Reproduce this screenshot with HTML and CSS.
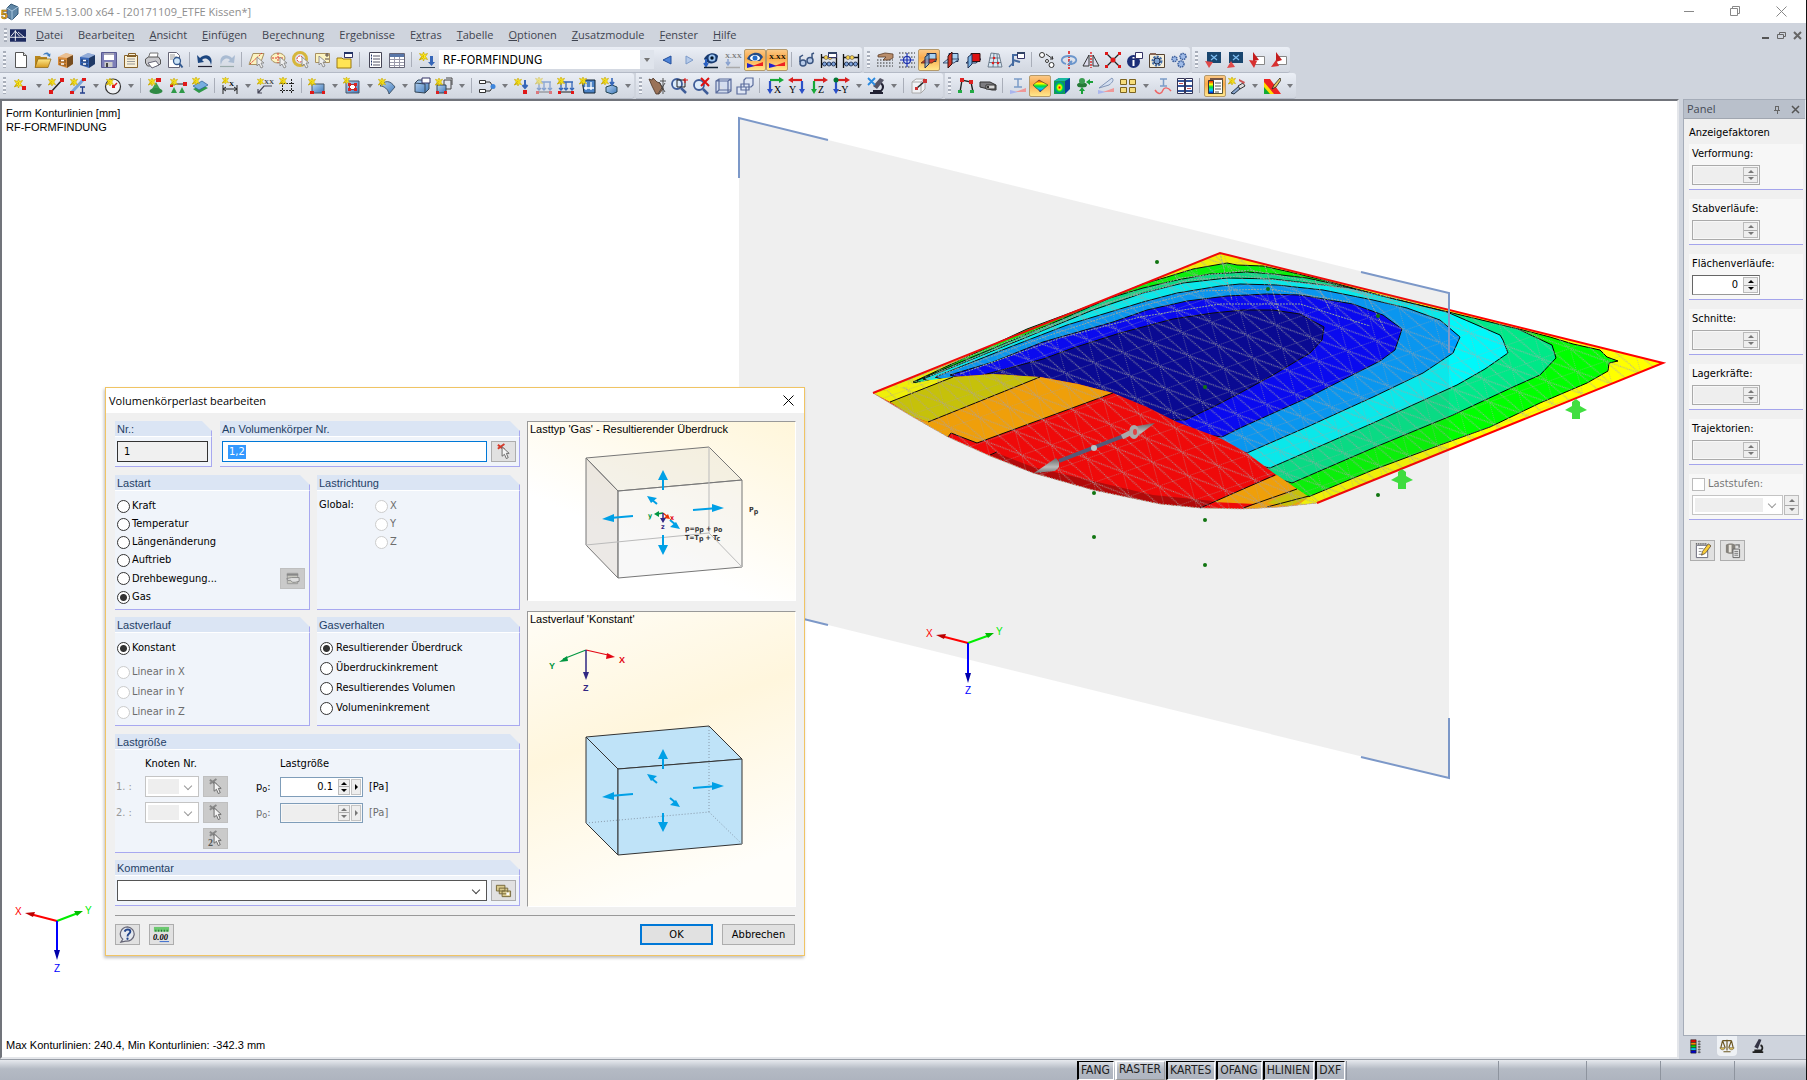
FILE: index.html
```html
<!DOCTYPE html>
<html lang="de">
<head>
<meta charset="utf-8">
<title>RFEM 5.13.00 x64 - [20171109_ETFE Kissen*]</title>
<link rel="stylesheet" href="styles.css">
</head>
<body>
<svg class="defs" aria-hidden="true">
<defs>
<linearGradient id="gb" x1="0" y1="0" x2="1" y2="1"><stop offset="0" stop-color="#b9d6f4"/><stop offset="1" stop-color="#3f78b8"/></linearGradient>
<linearGradient id="gf" x1="0" y1="0" x2="0" y2="1"><stop offset="0" stop-color="#ffe98a"/><stop offset="1" stop-color="#d69a20"/></linearGradient>
<linearGradient id="rb" x1="0" y1="0" x2="0" y2="1"><stop offset="0" stop-color="#e00"/><stop offset=".3" stop-color="#ff0"/><stop offset=".5" stop-color="#0d3"/><stop offset=".75" stop-color="#0cf"/><stop offset="1" stop-color="#00c"/></linearGradient>
<radialGradient id="rr"><stop offset="0" stop-color="#e00"/><stop offset=".35" stop-color="#ff0"/><stop offset=".65" stop-color="#0d3"/><stop offset="1" stop-color="#06c"/></radialGradient>
<linearGradient id="cone" x1="0" y1="0" x2="0" y2="1"><stop offset="0" stop-color="#666"/><stop offset=".6" stop-color="#bbb"/><stop offset="1" stop-color="#777"/></linearGradient>
<pattern id="mesh" width="30" height="24" patternUnits="userSpaceOnUse" patternTransform="matrix(.97 -.34 .27 .96 1217 345)"><path d="M0 0H30M0 0V24M0 0L30 24M0 0L15 24M15 0L30 24" fill="none" stroke="#aaa" stroke-width="1" stroke-dasharray="1 1"/></pattern>
<pattern id="meshfront" width="31" height="24" patternUnits="userSpaceOnUse" patternTransform="matrix(.95 -.33 .27 1 1103 400)"><path d="M0 0H31M0 0V24M0 0L31 24M0 0L15 24M15 0L31 24" fill="none" stroke="#b4a8a8" stroke-width="1" stroke-dasharray="1 1"/></pattern>

<symbol id="star" viewBox="0 0 9 9"><path d="M4.500 3.200 4.500 5.800 .5 8 2.500 4.500 .5 1.500 3.500 2.500 4.500 0 5.500 2.500 8.500 1.500 6.500 4.500 8.500 7.500 5.500 6.500 4.500 9 3.500 6.500 .5 7.500Z" fill="#ffee20" stroke="#c8a800" stroke-width=".7"/></symbol>
<symbol id="new" viewBox="0 0 18 18"><path d="M3.500 1.500h8l3 3v12h-11z" fill="#fff" stroke="#555"/><path d="M11.500 1.500v3h3" fill="#ddd" stroke="#555"/></symbol>
<symbol id="open" viewBox="0 0 18 18"><path d="M1 5h5l1 1h6v10H1z" fill="#b8861c"/><path d="M4 8h13l-3 8.500H1z" fill="url(#gf)" stroke="#8a6210" stroke-width=".7"/><path d="M9 4c2-3 5-3 6-1l1.500-.5L16 6l-3-1.500 1-.5c-1-1-3-1-5 0z" fill="#3d7dc0"/></symbol>
<symbol id="cab" viewBox="0 0 18 18"><path d="M2 6l8-4 7 2v9l-6 4-9-3z" fill="currentColor"/><path d="M11 7l6-3v9l-6 4z" fill="#000" opacity=".45"/><path d="M2 6l8-4 7 2-6 3z" fill="#fff" opacity=".45"/><path d="M3 8l7 1v3l-7-1zM3 12l7 1v2.500l-7-1.500z" fill="#000" opacity=".25"/><path d="M5 9.500h3M5 13h3" stroke="#fff" stroke-width="1.300"/></symbol>
<symbol id="save" viewBox="0 0 18 18"><path d="M1.500 1.500h15v15h-15z" fill="#7d7fb8" stroke="#585a90"/><path d="M4 2h10v7H4z" fill="#fff"/><path d="M4 2h10v2H4z" fill="#aab"/><path d="M4.500 11h8v5h-8z" fill="#ccc"/><path d="M6 12h2v4H6z" fill="#444"/></symbol>
<symbol id="clip" viewBox="0 0 18 18"><path d="M2.500 4.500h4v-2h7v2h2v12h-13z" fill="#f8f0d8" stroke="#85612a"/><path d="M5 8h8M5 10.500h8M5 13h8" stroke="#999"/><path d="M5 5h9" stroke="#85612a" stroke-width="2"/></symbol>
<symbol id="print" viewBox="0 0 18 18"><path d="M4 8l2-6h8l-1 6z" fill="#fff" stroke="#777"/><path d="M1.500 8l3-2h10l2 3v4l-4 2h-9l-2-3z" fill="#c8c8cc" stroke="#555"/><path d="M4 12l8-2 3 4-7 3z" fill="#fff" stroke="#667"/></symbol>
<symbol id="preview" viewBox="0 0 18 18"><path d="M2.500 1.500h8l3 3v12h-11z" fill="#fff" stroke="#667"/><path d="M4 4h5M4 6h7M4 8h3" stroke="#999"/><circle cx="11" cy="10" r="3.500" fill="#cfe6f8" stroke="#345a90" stroke-width="1.300"/><path d="M13.500 12.500l3 4" stroke="#345a90" stroke-width="2"/></symbol>
<symbol id="undo" viewBox="0 0 18 18"><path d="M1 4l1 8 6-1-2-2c3-3 8-1 9 5 3-9-5-13-11-7z" fill="currentColor"/><path d="M2 15.500h14" stroke="#223" stroke-width="1.200"/></symbol>
<symbol id="redo" viewBox="0 0 18 18"><path d="M17 4l-1 8-6-1 2-2c-3-3-8-1-9 5-3-9 5-13 11-7z" fill="#a9bbd2"/><path d="M2 15.500h14" stroke="#9aa" stroke-width="1.200"/></symbol>
<symbol id="cur" viewBox="0 0 9 12"><path d="M1 0v9l2-2 2 4 2-1-2-4h3z" fill="#eee" stroke="#888" stroke-width=".9"/></symbol>
<symbol id="selp" viewBox="0 0 18 18"><path d="M5 2.500h11l-4 11H1z" fill="#fbf3c0" stroke="#a89060"/><path d="M2 13L14 2" stroke="#d33" stroke-dasharray="2 1"/><use href="#cur" x="8" y="6" width="9" height="12"/></symbol>
<symbol id="sele" viewBox="0 0 18 18"><ellipse cx="8" cy="7" rx="7" ry="5" fill="#fbf3c0" stroke="#a89060"/><path d="M8 2v10M2 7h12" stroke="#d33" stroke-dasharray="2 1"/><use href="#cur" x="9" y="6" width="9" height="12"/></symbol>
<symbol id="selr" viewBox="0 0 18 18"><circle cx="8" cy="8" r="6.500" fill="none" stroke="#d6b63c" stroke-width="3"/><circle cx="8" cy="8" r="3" fill="#fff" stroke="#d33" stroke-dasharray="2 1"/><use href="#cur" x="9" y="6" width="9" height="12"/></symbol>
<symbol id="selx" viewBox="0 0 18 18"><path d="M1.500 2.500h14v9h-14z" fill="#fbf3c0" stroke="#a89060"/><path d="M11 4h4M13 2v4M11 8h4" stroke="#544"/><use href="#cur" x="4" y="5" width="9" height="12"/></symbol>
<symbol id="seld" viewBox="0 0 18 18"><path d="M1 7h5l1 1h8v9H1z" fill="#ffe454" stroke="#9c7a10"/><path d="M8.500 1.500h8v5h-8z" fill="#fff" stroke="#336"/><path d="M8 2h9" stroke="#236" stroke-width="2"/></symbol>
<symbol id="nav" viewBox="0 0 18 18"><path d="M3.500 1.500h12v15h-12z" fill="#fff" stroke="#445"/><path d="M7 5h7M7 8h7M7 11h7M7 14h7" stroke="#556"/><path d="M5 4.500h1M5 7.500h1M5 10.500h1M5 13.500h1" stroke="#236" stroke-width="2"/></symbol>
<symbol id="table" viewBox="0 0 18 18"><path d="M1.500 2.500h15v14h-15z" fill="#fff" stroke="#667"/><path d="M2 3h14v3H2z" fill="#5876a8"/><path d="M2 8.500h14M2 11.500h14M2 14.500h14M6.500 6v10M11.500 6v10" stroke="#99a"/></symbol>
<symbol id="lc" viewBox="0 0 18 18"><use href="#star" x="1" y="1" width="9" height="9"/><path d="M12 5h3v6h2l-3.500 4L10 11h2z" fill="#3566b8"/><path d="M2 16.500h15" stroke="#345"/></symbol>
<symbol id="prev" viewBox="0 0 18 18"><path d="M13 5v8L5 9z" fill="#4d83d8" stroke="#234f9c"/></symbol>
<symbol id="next" viewBox="0 0 18 18"><path d="M6 5v8l7-4z" fill="#b6cbea" stroke="#7d9bc9"/></symbol>
<symbol id="eyel" viewBox="0 0 18 18"><path d="M2 8c2-6 11-8 14-3l-1 5c-3 3-8 3-10 1z" fill="#173a70"/><circle cx="10" cy="7" r="3.500" fill="#9cc4f0"/><circle cx="10" cy="7" r="1.700" fill="#012"/><path d="M4 8v6M2 12l2 3 2-3" stroke="#2b60c0" stroke-width="2" fill="none"/><path d="M2 16.500h14" stroke="#123" stroke-width="1.500"/></symbol>
<symbol id="xl" viewBox="0 0 18 18"><path d="M4 8v6M2 11l2 3 2-3" stroke="#8ba3cf" stroke-width="1.500" fill="none"/><path d="M2 16.500h14" stroke="#aaa" stroke-width="1.500"/><text x="1" y="7" class="ico" fill="#777">X.XX</text></symbol>
<symbol id="eyer" viewBox="0 0 18 18"><path d="M1 8c2-7 13-9 16-2l-3 4H5z" fill="#244b86"/><ellipse cx="9" cy="7" rx="5" ry="3" fill="#fff"/><circle cx="9" cy="7" r="2.500" fill="#256cc8"/><path d="M1 17v-5l8 3z" fill="#22c"/><path d="M17 11v4H6z" fill="#e22"/></symbol>
<symbol id="xr" viewBox="0 0 18 18"><path d="M1 17v-5l8 3z" fill="#22c"/><path d="M17 11v4H6z" fill="#e22"/><text x="1" y="8" class="ico" fill="#000">X.XX</text></symbol>
<symbol id="glasses" viewBox="0 0 18 18"><circle cx="5" cy="12" r="3" fill="#b8cbe8" stroke="#3b5580" stroke-width="1.500"/><circle cx="12" cy="9.500" r="3" fill="#b8cbe8" stroke="#3b5580" stroke-width="1.500"/><path d="M2 11V6l3-2M14 7V3l2-1" stroke="#3b5580" stroke-width="1.500" fill="none"/></symbol>
<symbol id="abac" viewBox="0 0 18 18"><path d="M1.500 3v14M16.500 3v14M1 6.500h16M1 13h16" stroke="#111" stroke-width="1.300"/><g fill="#f4d24c" stroke="#654" stroke-width=".6"><circle cx="6" cy="6.500" r="2"/><circle cx="10" cy="6.500" r="2"/></g><g fill="#7fa4dc" stroke="#124" stroke-width=".8"><circle cx="4.500" cy="13" r="2"/><circle cx="9" cy="13" r="2"/><circle cx="13.500" cy="13" r="2"/></g></symbol>
<symbol id="abacw" viewBox="0 0 18 18"><use href="#abac" width="18" height="18"/><path d="M8.500 1.500h8v5h-8z" fill="#fff" stroke="#336"/><path d="M8 2h9" stroke="#346" stroke-width="2"/></symbol>
<symbol id="handg" viewBox="0 0 18 18"><path d="M1 9h16M1 12h16M1 15h16" stroke="#333" stroke-dasharray="1.500 1.500"/><path d="M2 4l7-2 8 1v4l-4 2H7l3-3-8 0z" fill="#b98d6a" stroke="#5c3d28" stroke-width=".8"/></symbol>
<symbol id="snap" viewBox="0 0 18 18"><path d="M1 2h16M1 6h16M1 12h16M1 16h16" stroke="#333" stroke-dasharray="1.500 1.500"/><circle cx="9" cy="9" r="3.500" fill="#d5e0f5" stroke="#1a2fb0" stroke-width="1.200"/><path d="M9 2v14M2 9h14" stroke="#1a2fb0" stroke-width="1.200"/></symbol>
<symbol id="wp" viewBox="0 0 18 18"><path d="M7 2.500h9v8H7z" fill="#a8d0f0" stroke="#235"/><path d="M1 12l5-4h11l-5 4z" fill="currentColor" stroke="#531" stroke-width=".8"/><path d="M5 6l4-3v10l-4 4z" fill="#79b2e4" stroke="#235" fill-opacity=".7"/></symbol>
<symbol id="wpr" viewBox="0 0 18 18"><path d="M7 2.500h9v8H7z" fill="#a8d0f0" stroke="#235"/><path d="M1 12l5-4h11l-5 4z" fill="#a8d0f0" stroke="#235" stroke-width=".8"/><path d="M6 5l4-4v12l-4 4z" fill="currentColor" stroke="#311"/></symbol>
<symbol id="wpx" viewBox="0 0 18 18"><path d="M2 12l5-4h10l-5 4z" fill="#a8d0f0" stroke="#235"/><path d="M7 2.500h9v8H7z" fill="#d11" stroke="#311"/><path d="M4 6l4-3v10l-4 4z" fill="#79b2e4" stroke="#235"/></symbol>
<symbol id="grid3" viewBox="0 0 18 18"><path d="M5 2l8 1 3 13H2zM3.500 7h10.500M3 11.500h12M8 2L7 16M11 3l1 13" fill="#d8e8f4" stroke="#567" stroke-width=".8"/><g fill="#d22"><circle cx="8" cy="7" r="1.300"/><circle cx="7" cy="12" r="1.300"/><circle cx="12" cy="12" r="1.300"/></g></symbol>
<symbol id="ucs" viewBox="0 0 18 18"><path d="M5 15V4h8M5 9l7 2" stroke="#456aa0" stroke-width="2" fill="none"/><path d="M9.500 1.500h7v6h-7z" fill="#fff" stroke="#336"/><path d="M9 2h8" stroke="#346" stroke-width="2"/><path d="M1 16l5-5" stroke="#456aa0" stroke-width="1.500"/></symbol>
<symbol id="move" viewBox="0 0 18 18"><circle cx="4" cy="4" r="2.500" fill="#fff" stroke="#333"/><circle cx="13.500" cy="14" r="2.500" fill="#fff" stroke="#333"/><circle cx="9" cy="10" r="1.500" fill="#fff" stroke="#333"/><path d="M8 3l7 5M15 8l-3 0M15 8l-1-3" stroke="#333" fill="none"/></symbol>
<symbol id="rot" viewBox="0 0 18 18"><path d="M9 0v18" stroke="#d11" stroke-width="1.500" stroke-dasharray="3 1"/><path d="M6 13C-1 11 1 5 9 5s10 6 3 8l-3 0 3-3M12 13l-3-3" stroke="#6b96cc" stroke-width="1.800" fill="none"/></symbol>
<symbol id="mir" viewBox="0 0 18 18"><path d="M9 1v16" stroke="#d11" stroke-width="1.300" stroke-dasharray="2 1"/><path d="M7 4v11H1zM11 4v11h6z" fill="#dde" stroke="#333"/></symbol>
<symbol id="cross" viewBox="0 0 18 18"><path d="M2 2l14 14M16 2L2 16" stroke="#222" stroke-width="1.300"/><g fill="#e01818"><path d="M1 1h3v3H1zM14 1h3v3h-3zM1 14h3v3H1zM14 14h3v3h-3z"/><circle cx="9" cy="9" r="2.500"/></g></symbol>
<symbol id="info" viewBox="0 0 18 18"><circle cx="7.500" cy="10.500" r="6.500" fill="#1c2f78"/><path d="M7.500 6v1.500M7.500 9v6" stroke="#fff" stroke-width="2"/><path d="M9.500 1.500h7v6h-7z" fill="#fff" stroke="#336"/></symbol>
<symbol id="gearw" viewBox="0 0 18 18"><path d="M1.500 3.500h15v13h-15z" fill="#f6efda" stroke="#543"/><path d="M2 2h6v2H2z" fill="#865"/><circle cx="9" cy="10" r="4" fill="none" stroke="#446ea8" stroke-width="3" stroke-dasharray="2 1"/><circle cx="9" cy="10" r="3" fill="#7fa4d4" stroke="#235"/></symbol>
<symbol id="gears" viewBox="0 0 18 18"><g fill="#9fbbe8" stroke="#3c5f9c" stroke-width="1.500" stroke-dasharray="1.500 .7"><circle cx="4.500" cy="8" r="2.500"/><circle cx="13" cy="5.500" r="3"/><circle cx="11" cy="13" r="3"/></g></symbol>
<symbol id="dxf" viewBox="0 0 18 18"><path d="M3 1h14v11H3z" fill="#19466f"/><path d="M7 4l6 5M13 4L7 9" stroke="#7fbdf0" stroke-width="1.200"/><path d="M1 10l8 1-4 6z" fill="#e04a4a"/></symbol>
<symbol id="dxfu" viewBox="0 0 18 18"><path d="M3 1h14v11H3z" fill="#19466f"/><path d="M7 4l6 5M13 4L7 9" stroke="#7fbdf0" stroke-width="1.200"/><path d="M1 17l8-1-4-6z" fill="#e04a4a"/></symbol>
<symbol id="pdf" viewBox="0 0 18 18"><path d="M6.500 5.500h10v8h-10z" fill="#fff" stroke="#888"/><path d="M5 1l6 8-6 1z" fill="#c41c1c"/><path d="M1 9l8 1-3 7z" fill="#d83030"/></symbol>
<symbol id="pdfu" viewBox="0 0 18 18"><path d="M6.500 5.500h10v8h-10z" fill="#fff" stroke="#888"/><path d="M6 1l6 8-6 2z" fill="#c41c1c"/><path d="M1 16l8-1-3-6z" fill="#d83030"/></symbol>
<symbol id="node" viewBox="0 0 18 18"><use href="#star" x="2" y="2" width="9" height="9"/><path d="M10 9h4v4h-4z" fill="#e01818"/></symbol>
<symbol id="line" viewBox="0 0 18 18"><path d="M4 15L15 3" stroke="#222" stroke-width="1.400"/><path d="M2 13h4v4H2zM13 1h4v4h-4z" fill="#e01818"/><use href="#star" x="1" y="1" width="8" height="8"/></symbol>
<symbol id="member" viewBox="0 0 18 18"><path d="M3 15L14 3" stroke="#7ba4d8" stroke-width="3"/><path d="M1 14h4v3H1zM13 1h4v3h-4z" fill="#e01818"/><path d="M11 10h5M11 16h5M13.500 10v6" stroke="#25408c" stroke-width="1.300"/><use href="#star" x="1" y="1" width="8" height="8"/></symbol>
<symbol id="arc" viewBox="0 0 18 18"><circle cx="9" cy="9.500" r="7.500" fill="#fff" fill-opacity=".6" stroke="#333" stroke-width="1.200"/><path d="M9 10l4-4" stroke="#e01818" stroke-width="1.500"/><path d="M8 8h3v3H8z" fill="#e01818"/><use href="#star" x="2" y="1" width="8" height="8"/></symbol>
<symbol id="supp" viewBox="0 0 18 18"><path d="M9 5l4 7H5z" fill="#3fa050"/><ellipse cx="9" cy="14" rx="6.500" ry="3" fill="#2f8a44"/><path d="M9 1h5v4H9z" fill="#e01818"/><use href="#star" x="1" y="1" width="8" height="8"/></symbol>
<symbol id="lsupp" viewBox="0 0 18 18"><path d="M3 7h13" stroke="#222"/><path d="M14 5h4v4h-4zM1 7h3v3H1z" fill="#e01818"/><path d="M5 10l3 6H2zM13 10l3 6h-6z" fill="#2f9a48"/><use href="#star" x="1" y="1" width="8" height="8"/></symbol>
<symbol id="ssupp" viewBox="0 0 18 18"><path d="M2 12l6 4 9-5-6-3z" fill="#2f9a48"/><path d="M2 9l6 4 9-5-6-4z" fill="#77aee0" stroke="#2a5c94" stroke-width=".7"/><use href="#star" x="1" y="0" width="8" height="8"/></symbol>
<symbol id="dim" viewBox="0 0 18 18"><path d="M2 8v9M16 8v9M2 12h14M5 10l-3 2 3 2M13 10l3 2-3 2" stroke="#222" fill="none"/><text x="8" y="9" class="ico" fill="#000">X</text><use href="#star" x="1" y="0" width="7" height="7"/></symbol>
<symbol id="note" viewBox="0 0 18 18"><path d="M16 9H8l-6 7M2 12v4h4" stroke="#445" fill="none" stroke-width="1.200"/><text x="8" y="7" class="ico" fill="#444">XX</text><use href="#star" x="1" y="1" width="7" height="7"/></symbol>
<symbol id="guide" viewBox="0 0 18 18"><path d="M4.500 5v12M13.500 2v15M2 6.500h15M2 13.500h15" stroke="#222" stroke-dasharray="2 1"/><use href="#star" x="1" y="0" width="8" height="8"/></symbol>
<symbol id="surf" viewBox="0 0 18 18"><path d="M4 7h12v9H4z" fill="url(#gb)" stroke="#456"/><path d="M2 14h4v3H2zM14 14h3v3h-3z" fill="#e01818"/><use href="#star" x="0" y="1" width="8" height="8"/></symbol>
<symbol id="opening" viewBox="0 0 18 18"><path d="M3 4h13v12H3z" fill="url(#gb)" stroke="#456"/><path d="M6.500 7.500h6v5h-6z" fill="#fff" stroke="#a33"/><path d="M5 6h3v3H5zM11 6h3v3h-3zM5 11h3v3H5zM11 11h3v3h-3z" fill="#d22"/><use href="#star" x="0" y="0" width="7" height="7"/></symbol>
<symbol id="shell" viewBox="0 0 18 18"><path d="M2 9c5-6 10-6 15 1l-6 7C10 12 6 9 2 9z" fill="url(#gb)" stroke="#345" stroke-width=".8"/><use href="#star" x="0" y="1" width="8" height="8"/></symbol>
<symbol id="solid" viewBox="0 0 18 18"><path d="M2 6l3-3h11v9l-4 4-10-1z" fill="url(#gb)" stroke="#345"/><path d="M2 6l10 1v9" fill="none" stroke="#345"/><path d="M9 1h8v5H9z" fill="#fff" stroke="#336"/></symbol>
<symbol id="solids" viewBox="0 0 18 18"><path d="M2 8h9v8H2z" fill="url(#gb)" stroke="#345"/><path d="M9 3h7v9h-5M9 3v5M11 1h6v7" fill="none" stroke="#444"/><path d="M1 14h3v3H1zM9 14h3v3H9z" fill="#d22"/><use href="#star" x="0" y="1" width="8" height="8"/></symbol>
<symbol id="combi" viewBox="0 0 18 18"><path d="M1.500 3.500h6v3h-6zM1.500 12.500h6v3h-6z" fill="#fff" stroke="#333"/><path d="M8 5h4l2 3M8 14h4l2-3" fill="none" stroke="#333"/><circle cx="15" cy="9.500" r="2.500" fill="#3e86dc"/></symbol>
<symbol id="nload" viewBox="0 0 18 18"><path d="M12 3v8M9.500 8l2.500 3 2.500-3" stroke="#3566b8" stroke-width="2" fill="none"/><path d="M10 13h4v4h-4z" fill="#e01818"/><use href="#star" x="1" y="1" width="8" height="8"/></symbol>
<symbol id="mload" viewBox="0 0 18 18"><path d="M3 5h13M4 5v8M9 5v8M15 5v8M2 11l2 2 2-2M7 11l2 2 2-2M13 11l2 2 2-2" stroke="#3566b8" stroke-width="1.300" fill="none"/><path d="M2 15h14" stroke="#222"/><path d="M1 14h3v3H1zM14 14h3v3h-3z" fill="#e01818"/><use href="#star" x="0" y="0" width="8" height="8"/></symbol>
<symbol id="sload" viewBox="0 0 18 18"><path d="M3 3h13v13H5z" fill="#4c83c6" stroke="#123"/><path d="M7 5v8M12 5v8M5 11h10" stroke="#fff" stroke-width="1.300"/><use href="#star" x="0" y="0" width="8" height="8"/></symbol>
<symbol id="vload" viewBox="0 0 18 18"><path d="M5 10l6-2 5 2v5l-5 2-6-2z" fill="url(#gb)" stroke="#245"/><path d="M11 1v6M9 5l2 3 2-3" stroke="#3566b8" stroke-width="1.600" fill="none"/><use href="#star" x="0" y="0" width="8" height="8"/></symbol>
<symbol id="pan" viewBox="0 0 18 18"><path d="M1 2l3 1 1-2 4 4 3 1 3 6-4 5H8L4 9z" fill="#9a7258" stroke="#4c3323" stroke-width=".8"/><path d="M15 1v16M11 5l6 10M17 6l-7 11M12 4h6" stroke="#444" stroke-width=".9"/></symbol>
<symbol id="zoomw" viewBox="0 0 18 18"><circle cx="7" cy="7" r="5" fill="#dcebfa" stroke="#3e5c98" stroke-width="1.800"/><path d="M7 3h8v7H7z" fill="none" stroke="#222"/><path d="M11 11l5 5" stroke="#3e5c98" stroke-width="2.500"/><path d="M15 1v5M13 3h5" stroke="#d11"/></symbol>
<symbol id="zoomx" viewBox="0 0 18 18"><circle cx="7" cy="8" r="5" fill="#dcebfa" stroke="#3e5c98" stroke-width="1.800"/><path d="M11 12l5 5" stroke="#3e5c98" stroke-width="2.500"/><path d="M9 1l8 8M17 1L9 9" stroke="#d11" stroke-width="2"/></symbol>
<symbol id="cube" viewBox="0 0 18 18"><path d="M2 4l3-2h12v12l-3 2H2zM2 4h12v12M14 4l3-2M5 2v11h12M5 13l-3 3" fill="#cddbf2" fill-opacity=".6" stroke="#5a6c9c" stroke-width="1.200"/></symbol>
<symbol id="cubes" viewBox="0 0 18 18"><path d="M8 3l2-2h7v7l-2 2H8zM5 7h8v6H5zM1 10h9v7H1z" fill="#e0e7f5" stroke="#5a6c9c" stroke-width="1.200"/></symbol>
<symbol id="axh" viewBox="0 0 18 18"><path d="M4 3h11" stroke="#18a838" stroke-width="2.200"/><path d="M13 0l5 3-5 3z" fill="#18a838"/><path d="M4 4v10" stroke="#2b50c8" stroke-width="2.200"/><path d="M1 12l3 5 3-5z" fill="#2b50c8"/></symbol>
<symbol id="vx" viewBox="0 0 18 18"><use href="#axh" width="18" height="18"/><text x="8" y="16" class="big">X</text></symbol>
<symbol id="vy" viewBox="0 0 18 18"><path d="M14 3H4" stroke="#d82020" stroke-width="2.200"/><path d="M5 0L0 3l5 3z" fill="#d82020"/><path d="M14 4v10" stroke="#2b50c8" stroke-width="2.200"/><path d="M11 12l3 5 3-5z" fill="#2b50c8"/><text x="1" y="16" class="big">Y</text></symbol>
<symbol id="vz" viewBox="0 0 18 18"><path d="M4 3h11" stroke="#d82020" stroke-width="2.200"/><path d="M13 0l5 3-5 3z" fill="#d82020"/><path d="M4 4v10" stroke="#18a838" stroke-width="2.200"/><path d="M1 12l3 5 3-5z" fill="#18a838"/><text x="8" y="16" class="big">Z</text></symbol>
<symbol id="vmy" viewBox="0 0 18 18"><path d="M4 3h11" stroke="#d82020" stroke-width="2.200"/><path d="M13 0l5 3-5 3z" fill="#d82020"/><path d="M4 4v10" stroke="#2b50c8" stroke-width="2.200"/><path d="M1 12l3 5 3-5z" fill="#2b50c8"/><circle cx="4" cy="3" r="2.500" fill="#073"/><text x="6" y="16" class="big">-Y</text></symbol>
<symbol id="scope" viewBox="0 0 18 18"><path d="M3 16h13M6 14h8c3-3 2-6 0-8" stroke="#223" stroke-width="2" fill="none"/><path d="M13 1l4 2-7 9-4-3z" fill="#556"/><path d="M1 1l7 7M8 1L1 8" stroke="#2a8ae0" stroke-width="1.800"/></symbol>
<symbol id="clipb" viewBox="0 0 18 18"><path d="M2 5l4-3h9v10l-4 4H2zM2 5h9v11M11 5l4-3" fill="#fff" fill-opacity=".6" stroke="#aaa"/><path d="M7 11l8-7" stroke="#222" stroke-width="1.500"/><path d="M5 10h3v3H5zM13 2h4v4h-4z" fill="#c33"/></symbol>
<symbol id="frame" viewBox="0 0 18 18"><path d="M3 15L5 3l9 2 2 10" stroke="#222" stroke-width="1.400" fill="none"/><path d="M3 1h4v4H3zM12 3h4v4h-4z" fill="#d22"/><path d="M1 13h4v3H1zM13 13h4v3h-4z" fill="#2a4"/></symbol>
<symbol id="cam" viewBox="0 0 18 18"><path d="M1 5h10l6 3v5h-4L1 10z" fill="#7c7c80" stroke="#333"/><path d="M7 8h9v4H7z" fill="#d8d8d8" stroke="#333"/><circle cx="9" cy="10" r="1.200" fill="#333"/></symbol>
<symbol id="ired" viewBox="0 0 18 18"><path d="M5 2h8M9 2v8M5 10h8" stroke="#7b9cc8" stroke-width="1.500"/><path d="M1 17v-4l8 2z" fill="#aab6ee"/><path d="M17 11v4H6z" fill="#ef9898"/></symbol>
<symbol id="rsurf" viewBox="0 0 18 18"><path d="M2 8l6-5 9 5-8 7c-1-3-4-3-7-7z" fill="url(#rb)" stroke="#333" stroke-width=".6"/></symbol>
<symbol id="rcube" viewBox="0 0 18 18"><path d="M1 4l5-3h11v11l-5 5H1z" fill="#0a3f9c"/><path d="M1 4h11v13H1z" fill="#10a050"/><ellipse cx="6.500" cy="10.500" rx="5" ry="6" fill="url(#rr)"/><path d="M1 4l5-3h11l-5 3z" fill="#1ab8a0"/></symbol>
<symbol id="react" viewBox="0 0 18 18"><ellipse cx="7" cy="8" rx="5" ry="2.500" fill="#277a38"/><circle cx="7" cy="4" r="3" fill="#3a9c50"/><path d="M7 10l3 4H8v3H6v-3H4zM18 4h-3V2l-4 3 4 3V6h3z" fill="#1aa038"/></symbol>
<symbol id="foil" viewBox="0 0 18 18"><path d="M2 11L15 1c2 2 1 4-3 7z" fill="#d4dff0" stroke="#8296b8"/><path d="M1 17v-4l8 2z" fill="#aab6ee"/><path d="M17 11v4H6z" fill="#ef9898"/></symbol>
<symbol id="four" viewBox="0 0 18 18"><path d="M1.500 2.500h6v5h-6zM10.500 2.500h6v5h-6zM1.500 10.500h6v5h-6zM10.500 10.500h6v5h-6z" fill="#f6dd7c" stroke="#7c6420"/></symbol>
<symbol id="iwave" viewBox="0 0 18 18"><path d="M6 2h7M9.500 2v7M6 9h7" stroke="#7b9cc8" stroke-width="1.500"/><path d="M1 13c4 6 7 3 8 0s5-3 8 1" stroke="#e66" fill="none" stroke-width="1.400"/></symbol>
<symbol id="tabs" viewBox="0 0 18 18"><path d="M1.500 1.500h7v15h-7zM9.500 1.500h7v15h-7z" fill="#fff" stroke="#335"/><path d="M2 4h6M2 9h6M2 14h6M10 4h6M10 9h6M10 14h6" stroke="#34569c" stroke-width="2"/><path d="M3 6.500h4M11 11.500h4" stroke="#c55"/></symbol>
<symbol id="legend" viewBox="0 0 18 18"><path d="M4.500 1.500h12v15h-12z" fill="#fff" stroke="#553"/><path d="M2.500 3.500h5v13h-5z" fill="url(#rb)" stroke="#333"/><path d="M9 6h6M9 9h6M9 12h6M9 15h4" stroke="#555"/><path d="M4 1h13v2H4z" fill="#754"/></symbol>
<symbol id="tool" viewBox="0 0 18 18"><path d="M3 16l8-7 2 2-7 6z" fill="#89a4cc" stroke="#234"/><path d="M10 9l5-3 2 3-5 3z" fill="#ddd" stroke="#333"/><path d="M11 2l6 3-1 2-5-3z" fill="#c55"/><use href="#star" x="0" y="0" width="8" height="8"/></symbol>
<symbol id="stripe" viewBox="0 0 18 18"><path d="M1 2h6l11 15H1z" fill="#e22"/><path d="M1 5l10 12H1z" fill="#fd0"/><path d="M1 10l6 7H1z" fill="#1a3"/><path d="M17 1l-6 7-2 4 4-2 5-7z" fill="#e8c860" stroke="#222" stroke-width=".8"/></symbol>
<symbol id="pick" viewBox="0 0 18 18"><path d="M3 2l7 5M10 1L3 6" stroke="currentColor" stroke-width="2"/><path d="M7.500 4v10l2.500-2 2 4.500 2-1-2-4.500h3z" fill="#f4f4f4" stroke="#666"/></symbol>
<symbol id="pencil" viewBox="0 0 18 18"><path d="M2.500 3.500h12v13h-12z" fill="#fff" stroke="#667"/><path d="M2 2h12" stroke="#555" stroke-width="2" stroke-dasharray="1 1"/><path d="M5 7h5M5 10h3M5 13h4" stroke="#888"/><path d="M8 14l1-4 6-8 3 2-6 8z" fill="#f8cd38" stroke="#543" stroke-width=".8"/></symbol>
<symbol id="jar" viewBox="0 0 18 18"><path d="M2 3c3-2 7-2 10 0v8c-3 2-7 2-10 0z" fill="#85827c"/><path d="M5 3h3v8H5z" fill="#e8e4dc"/><path d="M9.500 7.500h7v9h-7z" fill="#e4e4e4" stroke="#666"/><path d="M11 10h4M11 12h4M11 14h4" stroke="#777"/><path d="M12 3l4 0v3" stroke="#777" fill="none" stroke-width="1.500"/></symbol>
<symbol id="photo" viewBox="0 0 18 18"><path d="M3.500 3.500h11v11h-11z" fill="#c8c8c0" stroke="#999"/><path d="M3 5h12" stroke="#888" stroke-width="2"/><path d="M3 9l5-1 8 0v4l-4 1H9l-2-2H4z" fill="#ddd" stroke="#777" stroke-width=".8"/></symbol>
<symbol id="lib" viewBox="0 0 18 18"><path d="M1.500 3.500h9v6h-9zM4.500 6.500h9v6h-9zM7.500 9.500h9v6h-9z" fill="#d9c98c" stroke="#75683a"/><path d="M12 11h3v3h-3z" fill="#fff"/></symbol>
<symbol id="help" viewBox="0 0 18 18"><path d="M9 1a8 7.500 0 1 1-2 15l-5 1 2-3A8 7.500 0 0 1 9 1z" fill="#e4e8ee" stroke="#667" stroke-width="1.300"/><path d="M6 6c1-3 6-3 6 0 0 2-3 2-3 5" stroke="#24468c" stroke-width="2" fill="none"/><circle cx="9" cy="13.500" r="1.200" fill="#24468c"/></symbol>
<symbol id="units" viewBox="0 0 18 18"><path d="M1 1h16v5H1z" fill="#6cc870"/><path d="M3 6V4M6 6V4M9 6V4M12 6V4M15 6V4" stroke="#263"/><text x="0" y="15" class="num">0.00</text><path d="M7 16.500h10" stroke="#36c"/></symbol>
<symbol id="bars" viewBox="0 0 18 18"><g stroke="#222" stroke-width=".7"><path d="M2 2h6v3H2z" fill="#e00"/><path d="M2 5h6v3H2z" fill="#f80"/><path d="M2 8h6v3H2z" fill="#0d0"/><path d="M2 11h6v3H2z" fill="#0cf"/><path d="M2 14h6v3H2z" fill="#00c"/></g><path d="M10.500 3.500h2v1h-2zM10.500 6.500h2v1h-2zM10.500 9.500h2v1h-2zM10.500 12.500h2v1h-2zM10.500 15.500h2v1h-2z" fill="none" stroke="#555"/></symbol>
<symbol id="scale" viewBox="0 0 18 18"><path d="M9 2v12M4 3h10M5 15.500h8M4 3L2 11M4 3l3 8M14 3l-3 8M14 3l2 8" stroke="#6a5520" stroke-width="1.300" fill="none"/><path d="M1 11h6c-1 3-5 3-6 0zM11 11h6c-1 3-5 3-6 0z" fill="#e6c860" stroke="#6a5520" stroke-width=".7"/></symbol>
<symbol id="micro" viewBox="0 0 18 18"><path d="M4 16h12M6 14h8c2-3 1-5-1-6" stroke="#222" stroke-width="2" fill="none"/><path d="M11 1l3 1-4 10-4-2z" fill="#334"/></symbol>
<symbol id="logo" viewBox="0 0 18 18"><path d="M6 5l4-4 7 3v7l-6 6-5-3z" fill="#5f86a6" stroke="#345a78"/><path d="M6 5l5 3 6-4M11 8v9" stroke="#a8c6de" fill="none"/><text x="0" y="16" class="five">5</text></symbol>
<symbol id="bridge" viewBox="0 0 18 14"><path d="M0 0h18v14H0z" fill="#1c2a60"/><path d="M6 1v12M0 9h18M1 8l5-6 5 6M9 3l7 6" stroke="#fff" fill="none"/></symbol>
</defs>
</svg>

<div class="app">
<header class="title">
  <svg class="i"><use href="#logo"/></svg><h1>RFEM 5.13.00 x64 - [20171109_ETFE Kissen*]</h1>
  <div class="winbtns">
    <button aria-label="Minimieren"><svg width="11" height="11"><path d="M0 5.500h10" stroke="#888"/></svg></button>
    <button aria-label="Wiederherstellen"><svg width="11" height="11"><path d="M.5 2.500h7v7h-7zM2.500 2.500v-2h7v7h-2" fill="none" stroke="#888"/></svg></button>
    <button aria-label="Schließen"><svg width="11" height="11"><path d="M.5.5l10 10M10.500.5l-10 10" stroke="#888"/></svg></button>
  </div>
</header>
<nav class="menu">
  <span class="grip"></span><svg class="bridge"><use href="#bridge"/></svg>
  <a href="#"><u>D</u>atei</a><a href="#">Bearbeite<u>n</u></a><a href="#"><u>A</u>nsicht</a><a href="#"><u>E</u>infügen</a><a href="#">Be<u>r</u>echnung</a><a href="#">Er<u>g</u>ebnisse</a><a href="#">E<u>x</u>tras</a><a href="#"><u>T</u>abelle</a><a href="#"><u>O</u>ptionen</a><a href="#"><u>Z</u>usatzmodule</a><a href="#"><u>F</u>enster</a><a href="#"><u>H</u>ilfe</a>
  <div class="mdi">
    <button aria-label="Fenster minimieren"><svg width="9" height="9"><path d="M1 7h7" stroke="#555" stroke-width="2"/></svg></button>
    <button aria-label="Fenster wiederherstellen"><svg width="9" height="9"><path d="M.5 3.500h6v4h-6zM2.500 3v-1.500h6v4h-2" fill="none" stroke="#666"/></svg></button>
    <button aria-label="Fenster schließen"><svg width="9" height="9"><path d="M1 1l7 7M8 1L1 8" stroke="#666" stroke-width="2"/></svg></button>
  </div>
</nav>

<div class="row">
  <div class="bar"><span class="grip"></span>
    <button aria-label="Neu"><svg><use href="#new"/></svg></button><button aria-label="Öffnen"><svg><use href="#open"/></svg></button><button class="orange" aria-label="Projektmanager"><svg><use href="#cab"/></svg></button><button class="blue" aria-label="Blockmanager"><svg><use href="#cab"/></svg></button><button aria-label="Speichern"><svg><use href="#save"/></svg></button><button aria-label="Ablage"><svg><use href="#clip"/></svg></button><button aria-label="Drucken"><svg><use href="#print"/></svg></button><button aria-label="Vorschau"><svg><use href="#preview"/></svg></button><i class="sep"></i>
    <button class="navy" aria-label="Rückgängig"><svg><use href="#undo"/></svg></button><button aria-label="Wiederholen"><svg><use href="#redo"/></svg></button><i class="sep"></i>
    <button aria-label="Auswahl Rhomboid"><svg><use href="#selp"/></svg></button><button aria-label="Auswahl Ellipse"><svg><use href="#sele"/></svg></button><button aria-label="Auswahl Ring"><svg><use href="#selr"/></svg></button><button aria-label="Auswahl erweitern"><svg><use href="#selx"/></svg></button><button aria-label="Spezielle Auswahl"><svg><use href="#seld"/></svg></button><i class="sep"></i>
    <button aria-label="Navigator"><svg><use href="#nav"/></svg></button><button aria-label="Tabellen"><svg><use href="#table"/></svg></button><i class="sep"></i>
    <button aria-label="Neuer Lastfall"><svg><use href="#lc"/></svg></button>
    <span class="combo lastfall"><select aria-label="Lastfall"><option>RF-FORMFINDUNG</option></select></span>
    <button aria-label="Zurück"><svg><use href="#prev"/></svg></button><button aria-label="Weiter"><svg><use href="#next"/></svg></button><button aria-label="Lasten"><svg><use href="#eyel"/></svg></button><button aria-label="Lastwerte"><svg><use href="#xl"/></svg></button><button class="on" aria-label="Ergebnisse"><svg><use href="#eyer"/></svg></button><button class="on" aria-label="Ergebniswerte"><svg><use href="#xr"/></svg></button><i class="sep"></i>
    <button aria-label="Brille"><svg><use href="#glasses"/></svg></button><button aria-label="Berechnungsparameter"><svg><use href="#abacw"/></svg></button><button aria-label="Berechnen"><svg><use href="#abac"/></svg></button>
  </div>
  <div class="bar"><span class="grip"></span>
    <button aria-label="Raster setzen"><svg><use href="#handg"/></svg></button><button aria-label="Fang"><svg><use href="#snap"/></svg></button><button class="on red" aria-label="Ebene XY"><svg><use href="#wp"/></svg></button><button class="red" aria-label="Ebene YZ"><svg><use href="#wpr"/></svg></button><button aria-label="Ebene XZ"><svg><use href="#wpx"/></svg></button><button aria-label="Hilfsraster"><svg><use href="#grid3"/></svg></button><button aria-label="Koordinatensystem"><svg><use href="#ucs"/></svg></button><i class="sep"></i>
    <button aria-label="Verschieben"><svg><use href="#move"/></svg></button><button aria-label="Drehen"><svg><use href="#rot"/></svg></button><button aria-label="Spiegeln"><svg><use href="#mir"/></svg></button><button aria-label="Verbinden"><svg><use href="#cross"/></svg></button><button aria-label="Info"><svg><use href="#info"/></svg></button><button aria-label="Programmoptionen"><svg><use href="#gearw"/></svg></button><button aria-label="Einstellungen"><svg><use href="#gears"/></svg></button>
  </div>
  <div class="bar"><span class="grip"></span>
    <button aria-label="DXF-Import"><svg><use href="#dxf"/></svg></button><button aria-label="DXF-Export"><svg><use href="#dxfu"/></svg></button><button aria-label="CAD-Import"><svg><use href="#pdf"/></svg></button><button aria-label="CAD-Export"><svg><use href="#pdfu"/></svg></button>
  </div>
</div>
<div class="row">
  <div class="bar"><span class="grip"></span>
    <button aria-label="Knoten"><svg><use href="#node"/></svg></button><button class="dd" aria-label="Mehr"></button><button aria-label="Linie"><svg><use href="#line"/></svg></button><button aria-label="Stab"><svg><use href="#member"/></svg></button><button class="dd" aria-label="Mehr"></button><button aria-label="Kreis"><svg><use href="#arc"/></svg></button><button class="dd" aria-label="Mehr"></button><i class="sep"></i>
    <button aria-label="Knotenlager"><svg><use href="#supp"/></svg></button><button aria-label="Linienlager"><svg><use href="#lsupp"/></svg></button><button aria-label="Flächenlager"><svg><use href="#ssupp"/></svg></button><i class="sep"></i>
    <button aria-label="Bemaßung"><svg><use href="#dim"/></svg></button><button class="dd" aria-label="Mehr"></button><button aria-label="Kommentar"><svg><use href="#note"/></svg></button><button aria-label="Hilfslinien"><svg><use href="#guide"/></svg></button><i class="sep"></i>
    <button aria-label="Fläche"><svg><use href="#surf"/></svg></button><button class="dd" aria-label="Mehr"></button><button aria-label="Öffnung"><svg><use href="#opening"/></svg></button><button class="dd" aria-label="Mehr"></button><button aria-label="Schale"><svg><use href="#shell"/></svg></button><button class="dd" aria-label="Mehr"></button><button aria-label="Volumen"><svg><use href="#solid"/></svg></button><button aria-label="Volumenkörper"><svg><use href="#solids"/></svg></button><button class="dd" aria-label="Mehr"></button><i class="sep"></i>
    <button aria-label="Kombination"><svg><use href="#combi"/></svg></button><button class="dd" aria-label="Mehr"></button><button aria-label="Knotenlast"><svg><use href="#nload"/></svg></button><button class="off" aria-label="Linienlast"><svg><use href="#mload"/></svg></button><button aria-label="Stablast"><svg><use href="#mload"/></svg></button><button aria-label="Flächenlast"><svg><use href="#sload"/></svg></button><button aria-label="Volumenlast"><svg><use href="#vload"/></svg></button><button class="dd" aria-label="Mehr"></button>
  </div>
  <div class="bar"><span class="grip"></span>
    <button aria-label="Ansicht bewegen"><svg><use href="#pan"/></svg></button><button aria-label="Zoom Fenster"><svg><use href="#zoomw"/></svg></button><button aria-label="Zoom alles"><svg><use href="#zoomx"/></svg></button><button aria-label="Isometrie"><svg><use href="#cube"/></svg></button><button aria-label="Perspektive"><svg><use href="#cubes"/></svg></button><i class="sep"></i>
    <button aria-label="Ansicht X"><svg><use href="#vx"/></svg></button><button aria-label="Ansicht Y"><svg><use href="#vy"/></svg></button><button aria-label="Ansicht Z"><svg><use href="#vz"/></svg></button><button aria-label="Ansicht -Y"><svg><use href="#vmy"/></svg></button><button class="dd" aria-label="Mehr"></button><button aria-label="Sichtbarkeit"><svg><use href="#scope"/></svg></button><button class="dd" aria-label="Mehr"></button><i class="sep"></i>
    <button aria-label="Clipping"><svg><use href="#clipb"/></svg></button><button class="dd" aria-label="Mehr"></button>
  </div>
  <div class="bar"><span class="grip"></span>
    <button aria-label="Modell"><svg><use href="#frame"/></svg></button><button aria-label="Animation"><svg><use href="#cam"/></svg></button><i class="sep"></i>
    <button aria-label="Stabergebnisse"><svg><use href="#ired"/></svg></button><button class="on" aria-label="Flächenergebnisse"><svg><use href="#rsurf"/></svg></button><button aria-label="Volumenergebnisse"><svg><use href="#rcube"/></svg></button><button aria-label="Lagerreaktionen"><svg><use href="#react"/></svg></button><button aria-label="Schnittverlauf"><svg><use href="#foil"/></svg></button><button aria-label="Fenster anordnen"><svg><use href="#four"/></svg></button><button class="dd" aria-label="Mehr"></button><button aria-label="Verlauf"><svg><use href="#iwave"/></svg></button><button aria-label="Ergebnistabellen"><svg><use href="#tabs"/></svg></button><i class="sep"></i>
    <button class="on" aria-label="Panel"><svg><use href="#legend"/></svg></button><button aria-label="Werkzeug"><svg><use href="#tool"/></svg></button><button class="dd" aria-label="Mehr"></button><button aria-label="Farbskala"><svg><use href="#stripe"/></svg></button><button class="dd" aria-label="Mehr"></button>
  </div>
</div>

<div class="work">
<main class="view">
<svg class="model" role="img" aria-label="Modell">
<g transform="translate(-2 -101)">
<g stroke="#000" stroke-width="1">
<path d="M873 393L1220 253 1663 363 1317 503 1280 507 1243 509 1200 508 1160 504 1093 490 1033 473 990 456 948 437 913 417Z" fill="#ff0" stroke="none"/>
<path d="M913 382L1027 329 1097 303 1143 284 1167 277 1193 269 1227 263 1237 265 1263 266 1290 272 1323 280 1390 298 1473 319 1523 330 1550 337 1573 344 1600 350 1607 357 1618 361 1609 363 1608 371 1587 383 1540 403 1490 427 1440 445 1373 470 1308 497 1150 440Z" fill="#0f0"/>
<path d="M916 381L1060 320 1110 298 1143 288 1177 280 1210 274 1247 272 1273 274 1307 278 1330 283 1390 298 1490 322 1518 329 1552 345 1556 358 1540 375 1513 387 1453 415 1373 448 1292 483 1150 440Z" fill="#00e888"/>
<path d="M923 379L1027 337 1093 310 1143 293 1183 283 1227 278 1273 279 1307 283 1350 288 1390 298 1447 312 1500 335 1503 340 1508 353 1485 369 1457 385 1373 423 1270 468 1150 440Z" fill="#00f8fa"/>
<path d="M935 377L1010 347 1067 325 1143 302 1177 293 1220 286 1240 284 1277 285 1323 290 1373 300 1407 308 1440 320 1460 337 1453 353 1423 373 1373 397 1307 427 1247 453 1150 440Z" fill="#009cff"/>
<path d="M950 375L993 362 1043 342 1113 322 1147 310 1187 301 1227 296 1267 294 1300 295 1353 304 1383 315 1402 329 1395 350 1380 361 1307 398 1240 428 1222 437 1100 420Z" fill="#0000ff"/>
<path d="M983 375L1043 359 1073 348 1120 333 1173 319 1213 313 1243 310 1273 310 1300 314 1324 327 1322 340 1310 353 1273 375 1240 393 1213 407 1185 420 1080 420Z" fill="#000098"/>
</g>
<path d="M873 393L1220 253 1663 363 1317 503 1240 480 1100 420 950 376Z" fill="url(#mesh)"/>
<path d="M900 383L1040 329 1110 302 1190 280 1240 276 1330 286 1440 312M915 384L1050 335 1130 309 1200 291 1270 289 1350 302M960 374L1060 338 1140 317 1220 304 1300 304 1370 326M930 376L1100 306 1180 278 1250 270 1420 303" fill="none" stroke="#9ab0a8" stroke-dasharray="2 1"/>
<path d="M1220 253L1232 300M1265 266L1280 315M1175 276L1185 290M1315 280L1330 310M1365 292L1385 330" stroke="#a8b0a8" stroke-dasharray="2 1"/>
<g>
<path d="M873 393L953 377 993 374 1040 377 1078 384 1113 393 1147 407 1177 422 1220 438 1247 453 1275 474 1317 503 1280 507 1243 509 1200 508 1160 504 1093 490 1033 473 990 456 948 437 913 417Z" fill="#f00"/>
<path d="M873 393L930 380 953 377 890 402Z" fill="#ff0"/>
<path d="M890 402L953 377 993 374 1040 377 928 422 913 417Z" fill="#d2cc00"/>
<path d="M928 422L1040 377 1078 384 1113 393 977 443 951 433 948 437 913 417Z" fill="#ffa600"/>
<path d="M1213 502L1277 475 1297 489 1317 503 1280 507 1243 509 1255 504Z" fill="#ffa600"/>
<path d="M1267 503L1297 489 1309 497 1290 506Z" fill="#d2cc00"/>
<path d="M1309 497L1317 503 1298 505Z" fill="#ff0"/>
<path d="M990 455L997 453 1033 467 1093 481 1153 495 1213 501 1200 508 1160 504 1093 490 1033 473Z" fill="#ba0000"/>
<path d="M890 402L953 377M928 422L1040 377M977 443L1113 393M948 437L951 433 977 443M990 455L997 452M1200 508L1275 475M1243 508L1297 489M1267 507L1309 496" fill="none" stroke="#000"/>
<path d="M873 393L953 377 993 374 1040 377 1078 384 1113 393 1147 407 1177 422 1220 438 1247 453 1275 474 1317 503 1280 507 1243 509 1200 508 1160 504 1093 490 1033 473 990 456 948 437 913 417Z" fill="url(#meshfront)"/>
<path d="M873 393L913 417 948 437 990 456 1033 473 1093 490 1160 504 1200 508 1243 509 1280 507 1317 503" fill="none" stroke="#bbb" stroke-dasharray="2 1"/>
</g>
<path d="M873 393L1220 253 1663 363 1317 503" fill="none" stroke="#f00" stroke-width="2"/>
<g fill="#087808"><circle cx="1157" cy="262" r="2"/><circle cx="1268" cy="289" r="2"/><circle cx="1378" cy="316" r="2"/><circle cx="1205" cy="387" r="2"/><circle cx="1094" cy="493" r="2"/><circle cx="1094" cy="537" r="2"/><circle cx="1205" cy="520" r="2"/><circle cx="1205" cy="565" r="2"/><circle cx="1378" cy="495" r="2"/></g>
<path d="M739 118L1449 293V778L739 603Z" fill="#666" fill-opacity=".1"/>
<g fill="#20d820" fill-opacity=".85"><path d="M1576 399l-4 3v4l-7 4 7 3v6h8v-6l7-3-7-4v-4zM1402 469l-4 3v4l-7 4 7 3v6h8v-6l7-3-7-4v-4z"/></g>
<path d="M1059 461L1126 435" stroke="#555a78" stroke-width="4"/>
<path d="M1034 473l22-15 3 4v5l-4 4z" fill="url(#cone)"/><path d="M1155 423l-24 4 4 11z" fill="url(#cone)"/><path d="M1122 437l8-4" stroke="#aaa" stroke-width="5"/><ellipse cx="1134" cy="432" rx="5" ry="7" fill="#aaa"/><ellipse cx="1135" cy="432" rx="2" ry="3" fill="#d44"/><circle cx="1094" cy="448" r="3" fill="#b8c4c8"/>
<g fill="none" stroke="#7c98c8" stroke-width="2"><path d="M739 178V118L828 140M1361 272L1449 293V353M1361 757L1449 778V718M739 543V603L828 625"/></g>
<g stroke-width="2" fill="none"><path d="M57 921L30 914" stroke="#f00"/><path d="M57 921L78 913" stroke="#0e0"/><path d="M57 921V952" stroke="#00f"/><path d="M968 643L941 636" stroke="#f00"/><path d="M968 643L990 635" stroke="#0e0"/><path d="M968 643V675" stroke="#00f"/></g>
<g fill="#b00"><path d="M25 913l10-1-2 5zM936 635l10-1-2 5z"/></g><g fill="#0b0"><path d="M83 911l-9 0 3 5zM994 633l-9 0 3 5z"/></g><g fill="#00a"><path d="M54 950h6l-3 10zM965 673h6l-3 10z"/></g>
<g class="cad"><text x="15" y="915" fill="#f00">X</text><text x="85" y="914" fill="#0e0">Y</text><text x="54" y="972" fill="#00f">Z</text><text x="926" y="637" fill="#f00">X</text><text x="996" y="635" fill="#0e0">Y</text><text x="965" y="694" fill="#00f">Z</text></g>
</g>
</svg>
<p class="cap">Form Konturlinien [mm]<br>RF-FORMFINDUNG</p>
<p class="cap">Max Konturlinien: 240.4, Min Konturlinien: -342.3 mm</p>
</main>

<aside class="panel">
  <div class="pbody">
  <header><h2>Panel</h2><button aria-label="Anheften"><svg width="9" height="9"><path d="M2.500 1v4M5.500 1v4M2 1.500h4M1 5.500h6M4.500 6v3" stroke="#666"/></svg></button><button aria-label="Panel schließen"><svg width="9" height="9"><path d="M1 1l7 7M8 1L1 8" stroke="#555" stroke-width="1.500"/></svg></button></header>
  <div class="factors">
  <h3>Anzeigefaktoren</h3>
  <div class="fac"><label for="f1">Verformung:</label><span class="spin"><input id="f1" disabled><i></i></span></div>
  <div class="fac"><label for="f2">Stabverläufe:</label><span class="spin"><input id="f2" disabled><i></i></span></div>
  <div class="fac"><label for="f3">Flächenverläufe:</label><span class="spin live"><input id="f3" value="0"><i></i></span></div>
  <div class="fac"><label for="f4">Schnitte:</label><span class="spin"><input id="f4" disabled><i></i></span></div>
  <div class="fac"><label for="f5">Lagerkräfte:</label><span class="spin"><input id="f5" disabled><i></i></span></div>
  <div class="fac"><label for="f6">Trajektorien:</label><span class="spin"><input id="f6" disabled><i></i></span></div>
  <div class="fac"><label class="chk"><input type="checkbox" disabled>Laststufen:</label><div class="steps"><span class="combo dis"><select aria-label="Laststufe" disabled></select></span><span class="spin only"><i></i></span></div></div>
  <div class="pbtns"><button class="sq" aria-label="Bearbeiten"><svg><use href="#pencil"/></svg></button><button class="sq" aria-label="Übernehmen"><svg><use href="#jar"/></svg></button></div>
  </div>
  </div>
  <div class="ptabs"><button aria-label="Farbskala"><svg><use href="#bars"/></svg></button><button class="sel" aria-label="Faktoren"><svg><use href="#scale"/></svg></button><button aria-label="Filter"><svg><use href="#micro"/></svg></button></div>
</aside>
</div>

<footer class="status">
  <span class="cell">FANG</span><span class="cell up">RASTER</span><span class="cell">KARTES</span><span class="cell">OFANG</span><span class="cell">HLINIEN</span><span class="cell">DXF</span>
  <span class="rest"><i></i><i></i><i></i><i></i><i></i></span>
</footer>

<form class="dialog" role="dialog" aria-labelledby="dt">
  <header><h2 id="dt">Volumenkörperlast bearbeiten</h2><button type="button" aria-label="Dialog schließen"><svg width="11" height="11"><path d="M.5.5l10 10M10.500.5l-10 10" stroke="#000"/></svg></button></header>
  <div class="cols">
  <div class="left">
    <div class="pair nr">
      <section class="grp"><h3><label for="nr">Nr.:</label></h3><div class="gb line"><input id="nr" class="tx ro" value="1" readonly></div></section>
      <section class="grp"><h3><label for="vk">An Volumenkörper Nr.</label></h3><div class="gb line"><div class="tx focus"><input id="vk" value="1,2" size="2"></div><button type="button" class="sq red" aria-label="Auswählen"><svg><use href="#pick"/></svg></button></div></section>
    </div>
    <div class="pair">
      <section class="grp"><h3>Lastart</h3><div class="gb radios r18">
        <label><input type="radio" name="art">Kraft</label><label><input type="radio" name="art">Temperatur</label><label><input type="radio" name="art">Längenänderung</label><label><input type="radio" name="art">Auftrieb</label><div class="wide"><label><input type="radio" name="art">Drehbewegung...</label><button type="button" class="sq" disabled aria-label="Drehbewegung bearbeiten"><svg><use href="#photo"/></svg></button></div><label><input type="radio" name="art" checked>Gas</label></div></section>
      <section class="grp"><h3>Lastrichtung</h3><div class="gb dir"><span>Global:</span><div class="radios r18"><label class="dim"><input type="radio" name="ri" disabled>X</label><label class="dim"><input type="radio" name="ri" disabled>Y</label><label class="dim"><input type="radio" name="ri" disabled>Z</label></div></div></section>
    </div>
    <div class="pair low">
      <section class="grp"><h3>Lastverlauf</h3><div class="gb radios r20"><label class="first"><input type="radio" name="vl" checked>Konstant</label><label class="dim"><input type="radio" name="vl" disabled>Linear in X</label><label class="dim"><input type="radio" name="vl" disabled>Linear in Y</label><label class="dim"><input type="radio" name="vl" disabled>Linear in Z</label></div></section>
      <section class="grp"><h3>Gasverhalten</h3><div class="gb radios r20 gas"><label><input type="radio" name="gv" checked>Resultierender Überdruck</label><label><input type="radio" name="gv">Überdruckinkrement</label><label><input type="radio" name="gv">Resultierendes Volumen</label><label><input type="radio" name="gv">Volumeninkrement</label></div></section>
    </div>
    <section class="grp size"><h3>Lastgröße</h3><div class="gb sizes">
      <span class="c2">Knoten Nr.</span><span class="c5">Lastgröße</span>
      <span class="c1 dim">1. :</span><span class="combo dis"><select aria-label="Knoten 1" disabled></select></span><button type="button" class="sq" disabled aria-label="Knoten 1 wählen"><svg><use href="#pick"/></svg></button><label class="c4" for="p1">p<sub>o</sub>:</label><span class="spin live"><input id="p1" value="0.1"><i></i><b></b></span><span class="unit">[Pa]</span>
      <span class="c1 dim">2. :</span><span class="combo dis"><select aria-label="Knoten 2" disabled></select></span><button type="button" class="sq" disabled aria-label="Knoten 2 wählen"><svg><use href="#pick"/></svg></button><label class="c4 dim" for="p2">p<sub>o</sub>:</label><span class="spin"><input id="p2" disabled><i></i><b></b></span><span class="unit dim">[Pa]</span>
      <button type="button" class="sq c3" disabled aria-label="Zwei Knoten wählen"><svg><use href="#pick"/><text x="1" y="16" class="two">2</text></svg></button>
    </div></section>
    <section class="grp comment"><h3><label for="kom">Kommentar</label></h3><div class="gb line"><span class="combo kom"><select id="kom"></select></span><button type="button" class="sq" aria-label="Kommentare"><svg><use href="#lib"/></svg></button></div></section>
  </div>
  <div class="right">
    <figure class="pic one"><figcaption>Lasttyp 'Gas' - Resultierender Überdruck</figcaption>
      <svg viewBox="527 436 268 164"><g stroke="#777" fill="#e4e0d4" fill-opacity=".4"><path d="M586 458L709 447 742 480 618 491Z"/><path d="M586 458L618 491V578L586 545Z" fill="#cfc9c0"/><path d="M618 491L742 480V567L618 578Z" fill="#eee"/><path d="M586 545L709 533 742 567M709 533V447" fill="none" stroke="#bbb"/></g>
      <g class="arrows"><path d="M663 490V474M633 516L610 518M693 510L718 508M657 504L651 499M670 520L676 525M663 535V550"/><path d="M658 480l5-10 5 10zM602 519l12-5v8zM724 508l-12-4v8zM647 496l10 2-6 5zM680 529l-10-2 6-5zM658 545l5 10 5-10z"/></g>
      <path d="M663 513L657 514" stroke="#009640" stroke-width="1.500"/><path d="M654 514l5-3v6z" fill="#009640"/><path d="M663 513L668 517" stroke="#e30" stroke-width="1.500"/><path d="M670 519l-6-1 4-4z" fill="#e30"/><path d="M663 513V519" stroke="#312783" stroke-width="1.500"/><path d="M660 518h6l-3 5z" fill="#312783"/>
      <g class="tiny"><text x="648" y="518" fill="#009640">y</text><text x="670" y="520" fill="#e30613">x</text><text x="661" y="529" fill="#312783">z</text><text x="749" y="512">P<tspan dy="2">p</tspan></text><text x="685" y="531">p=p<tspan dy="1">p</tspan><tspan dy="-1"> + p</tspan><tspan dy="1">o</tspan></text><text x="685" y="540">T=T<tspan dy="1">p</tspan><tspan dy="-1"> + T</tspan><tspan dy="1">c</tspan></text></g></svg></figure>
    <figure class="pic two"><figcaption>Lastverlauf 'Konstant'</figcaption>
      <svg viewBox="527 626 268 280"><g fill="none" stroke-width="1.200"><path d="M586 650L563 659" stroke="#009640"/><path d="M586 650L608 655" stroke="#e30613"/><path d="M586 650V674" stroke="#312783" stroke-width="1.500"/></g><path d="M559 662l8-6 1 5z" fill="#009640"/><path d="M615 657l-8-4-1 6z" fill="#e30613"/><path d="M583 672h6l-3 8z" fill="#312783"/>
      <g class="axl"><text x="549" y="669" fill="#009640">Y</text><text x="619" y="663" fill="#e30613">X</text><text x="583" y="691" fill="#312783">Z</text></g>
      <g stroke="#333" fill="#bfe3f8" stroke-linejoin="round"><path d="M586 737L709 726 742 759 618 769Z"/><path d="M586 737L618 769V855L586 823Z"/><path d="M618 769L742 759V844L618 855Z"/><path d="M586 823L709 812 742 844M709 812V726" fill="none" stroke="#89a" stroke-dasharray="1 2"/></g>
      <g class="arrows"><path d="M663 769V753M633 794L610 796M693 788L718 786M657 783L651 778M670 798L676 803M663 813V828"/><path d="M658 759l5-10 5 10zM602 797l12-5v8zM724 786l-12-4v8zM647 774l10 2-6 5zM680 807l-10-2 6-5zM658 822l5 10 5-10z"/></g></svg></figure>
  </div>
  </div>
  <footer><button type="button" class="sq" aria-label="Hilfe"><svg><use href="#help"/></svg></button><button type="button" class="sq" aria-label="Einheiten"><svg><use href="#units"/></svg></button><button type="button" class="txt ok">OK</button><button type="button" class="txt">Abbrechen</button></footer>
</form>
</div>
</body>
</html>
```
FILE: styles.css
```css
:root{--ui:"DejaVu Sans Condensed","DejaVu Sans",sans-serif;--seg:"Open Sans","Noto Sans",sans-serif;--ms:"Liberation Sans",Arial,sans-serif}
*{box-sizing:border-box}
html,body{height:100%}
body{margin:0;font:11px/14px var(--ui);color:#000;background:#cfd4dd;overflow:hidden}
h1,h2,h3,p,figure{margin:0;font-weight:400;font-size:inherit}
button{font:inherit;color:inherit;padding:0;border:0;background:none;display:flex;align-items:center;justify-content:center;flex:none}
select,input{font:inherit;color:inherit;margin:0}
svg{display:block;flex:none}
.defs{position:absolute;width:0;height:0}
.ico{font:bold 7px "Liberation Serif",serif}
.big{font:10px "Liberation Serif",serif}
.num{font:italic bold 9px "Liberation Serif",serif}
.five{font:bold 12px var(--ms);fill:#f0b020;stroke:#6b4a00;stroke-width:.5px}
.two{font:bold 10px "Liberation Serif",serif;fill:#555}
.app{position:relative;height:100vh;display:flex;flex-direction:column;border-right:1px solid #111}

.title{height:23px;flex:none;background:#fff;display:flex;align-items:center;gap:5px;padding-left:1px;color:#8e8e8e;font:11px/16px var(--seg)}
.title .i{width:18px;height:18px}
.winbtns{margin-left:auto;display:flex;gap:35px;padding-right:19px}
.menu{height:24px;flex:none;display:flex;align-items:center;gap:15px;padding-left:4px;font:11px/16px var(--seg)}
.menu a{color:#3f4450;text-decoration:none}
.menu .bridge{width:16px;height:13px;margin:0 -5px 0 -16px}
.menu .grip{height:14px}
.mdi{margin-left:auto;display:flex;gap:7px;padding-right:4px}

.row{height:26px;flex:none;display:flex;gap:2px}
.bar{display:flex;align-items:center;padding-left:3px;background:linear-gradient(#ebeff6,#dadfe8 60%,#d2d7e0);border-bottom:1px solid #b4bac6;border-radius:0 3px 3px 0}
.grip{width:3px;height:17px;margin-right:4px;flex:none;background:repeating-linear-gradient(#a8aeba 0 2px,#f4f6fa 2px 4px)}
.bar button{width:22px;height:22px;border:1px solid transparent;border-radius:2px}
.bar button svg{width:18px;height:18px}
.bar button.on{background:linear-gradient(#fbc986,#fba94a 40%,#ffe78c);border-color:#b59a6b}
.bar button.off{opacity:.5}
.bar button.dd{width:13px}
.bar .dd::after{content:"";border:3px solid transparent;border-top:4px solid #77797e;border-bottom:0}
.bar .sep{width:8px;height:15px;background:linear-gradient(#a9aeb9,#a9aeb9) 3px 0/1px 100% no-repeat}
.orange{color:#d98c3a}.blue{color:#3a68b8}.navy{color:#1c4680}.red{color:#d63a2a}
.combo{position:relative;display:flex}
.combo select{appearance:none;width:100%;height:100%;border:0;border-radius:0;background:none;padding:0 4px;opacity:1}
.combo::after{content:"";position:absolute;right:7px;top:50%;width:5px;height:5px;margin-top:-4px;border:1px solid #444;border-width:0 1px 1px 0;transform:rotate(45deg);pointer-events:none}
.lastfall{width:215px;height:19px;background:linear-gradient(90deg,#fff 201px,#dfe4ec 201px);font-size:12px;margin:0 2px 0 1px}
.lastfall::after{right:4px;width:0;height:0;border:3px solid transparent;border-top:4px solid #777;transform:none;margin-top:-2px}

.work{flex:1;min-height:0;display:flex}
.view{flex:1;min-width:0;position:relative;background:#fff;border:2px solid #71747b;border-right-color:#e4e6ea;border-bottom-color:#e4e6ea;padding:5px 5px 5px 4px;display:flex;flex-direction:column;justify-content:space-between}
.model{position:absolute;inset:0;width:100%;height:100%}
.cap{position:relative;font:11px/14px var(--ms)}
.cad{font:10px var(--ms)}

.panel{width:123px;flex:none;margin-left:4px;display:flex;flex-direction:column}
.pbody{flex:1;background:#f0f0f0;border:1px solid #a5acb8;border-right-color:#e4e8ee}
.panel header{height:19px;display:flex;align-items:center;gap:9px;padding:0 5px 0 3px;background:#b9c0cb;border-bottom:1px solid #a0a6b0;color:#444a55;font:11px/16px var(--seg)}
.panel header h2{flex:1}
.factors{padding:7px 2px 0 5px;display:flex;flex-direction:column;gap:9px}
.factors h3{margin-bottom:-5px}
.fac{height:46px;background:#f7f7f7;border-bottom:1px solid #a4a4ec;padding:3px 2px 0 3px;display:flex;flex-direction:column;gap:4px}
.spin{width:68px;height:20px;display:flex;border:1px solid #aaa;padding:1px;background:#f7f7f7}
.spin.live{border-color:#666 #999 #999 #666;background:#fff}
.spin input{flex:1;min-width:0;border:0;padding:0 5px;text-align:right;background:#eee;outline:0}
.spin.live input{background:#fff}
.spin i{width:15px;background:linear-gradient(#aaa,#aaa) 0 50%/100% 1px no-repeat,#eee;border:1px solid #bbb;display:flex;flex-direction:column;justify-content:space-around;align-items:center}
.spin i::before,.spin i::after{content:"";border:3px solid transparent;border-bottom:3px solid #777;border-top:0}
.spin i::after{border-top:3px solid #777;border-bottom:0}
.spin.live i::before{border-bottom-color:#000}.spin.live i::after{border-top-color:#000}
.chk{display:flex;align-items:center;gap:3px;color:#777}
.chk input{appearance:none;width:13px;height:13px;border:1px solid #bbb;background:#fff}
.steps{display:flex;gap:1px}
.steps .combo{width:91px;height:20px}
.steps .combo select{height:20px}
.spin.only{width:16px;border:0;padding:0}
.pbtns{display:flex;gap:5px;padding:11px 0 0 1px}
.sq{width:25px;height:21px;border:1px solid #adadad;background:#e1e1e1}
.sq svg{width:17px;height:17px}
.sq:disabled{background:#cacaca;border-color:#bfbfbf;color:#888}
.ptabs{display:flex;gap:10px;height:23px;padding-left:4px}
.ptabs button{width:20px;height:20px}
.ptabs svg{width:16px;height:16px}
.ptabs .sel{background:#eef1f5;border-radius:0 0 4px 4px}

.status{height:21px;flex:none;display:flex;padding:1px 0 0 1077px;gap:1px;background:linear-gradient(#e6e9ee,#b4bac4 45%,#aeb4bf);border-top:1px solid #9a9fa8;font-size:12px;color:#222}
.cell{height:19px;line-height:17px;padding:0 3px 0 2px;min-width:27px;border:1px solid #fff;border-left:2px solid #000;border-top-color:#000;white-space:nowrap}
.cell.up{border-color:#fff #999 #999 #fff;line-height:14px}
.rest{flex:1;display:grid;grid-template-columns:152px 88px 74px 74px auto}
.rest i{border-left:1px solid #8e949e}

.dialog{position:absolute;left:105px;top:387px;width:700px;background:#f0f0f0;border:1px solid #f0c464;box-shadow:-1px 2px 3px rgba(0,0,0,.25);color:#000}
.dialog>header{height:25px;background:#fff;display:flex;align-items:center;justify-content:space-between;padding:0 10px 0 3px;font:11px/16px var(--seg)}
.cols{display:flex;gap:7px;margin:8px 9px 0 9px;padding-bottom:8px;border-bottom:1px solid #999}
.left{width:405px;display:flex;flex-direction:column}
.pair{display:grid;grid-template-columns:195px 203px;gap:7px;margin-bottom:7px}
.pair.nr{grid-template-columns:97px 300px;gap:8px;margin-bottom:8px}
.pair.low{margin-bottom:8px}
.grp{display:flex;flex-direction:column;color:#000}
.grp h3{height:16px;padding-left:2px;background:#dbe5f4;color:#1f3f66;font:11px/16px var(--ms);border-right:1px solid #a8a8f0;border-bottom:1px solid #fff;clip-path:polygon(0 0,calc(100% - 10px) 0,100% 10px,100% 100%,0 100%)}
.gb{flex:1 0 auto;background:#f0f4fa;border:1px solid #a8a8f0;border-width:0 1px 1px 0}
.line{display:flex;align-items:center;gap:4px;padding:0 3px 0 2px;min-height:30px}
.tx{height:21px;flex:1;min-width:0;padding:0 6px;background:#fff;border:1px solid #333}
.tx.ro{background:#f0f0f0}
.focus{border-color:#0078d7;display:flex;align-items:center;padding:0 5px}
.focus input{border:0;width:18px;padding:0 1px;background:#3399ff;color:#fff;outline:0}
.radios{display:flex;flex-direction:column;padding-left:2px}
.radios label{display:flex;align-items:center;gap:2px}
.radios input{appearance:none;flex:none;width:13px;height:13px;border:1px solid #333;border-radius:50%;background:#fff}
.radios input:checked{background:radial-gradient(#333 0 3px,#fff 4px)}
.radios input:disabled{border-color:#ccc}
.r18{padding-top:6px}
.r18 label{height:18px}
.gb.r18{min-height:119px}
.wide{display:flex;align-items:center;justify-content:space-between;height:19px;padding-right:4px}
.dim{color:#6d6d6d}
.c1.dim{color:#999}
.dir{display:flex}
.dir>span{width:56px;padding:7px 0 0 2px}
.low .gb{min-height:93px;padding-top:5px}
.radios.gas{padding-left:3px}
.gas label{gap:3px}
.r20 label{height:20px}
.r20 .first{margin-bottom:4px}
.size .gb{min-height:103px}
.sizes{display:grid;grid-template-columns:28px 54px 40px 38px 83px 1fr;grid-template-rows:14px 21px 21px 21px;gap:5px 1px;padding:7px 0 0 1px;align-items:center;align-content:start}
.sizes .c2{grid-column:2/5}.sizes .c5{grid-column:5/7}.sizes .c3{grid-column:3}
.sizes .combo{height:21px}
.dis{border:1px solid #c4c4c4;background:linear-gradient(90deg,#eee,#eee) 2px 2px/calc(100% - 21px) calc(100% - 4px) no-repeat,#fff}
.dis::after{border-color:#999}
.sizes .sq{margin-left:3px}
.sizes .spin{width:83px;border-color:#7f9db9}
.spin b{width:10px;border:1px solid #c4c4c4;background:#eee;display:flex;align-items:center;justify-content:center}
.spin b::after{content:"";border:3px solid transparent;border-left:3px solid #777;border-right:0}
.spin.live b::after{border-left-color:#000}
.unit{padding-left:5px}
.sizes .spin i{width:12px;margin-right:1px}
.size .c4{margin-left:15px}
sub{font-size:9px;line-height:0;vertical-align:-2px}
.comment{margin-top:7px}
.kom{flex:1;height:21px;border:1px solid #555;background:#fff}
.right{flex:1;display:flex;flex-direction:column;gap:10px}
.pic{border:1px solid #999;border-right-color:#fff;border-bottom-color:#fff;background:linear-gradient(25deg,#fff 35%,#fff6da);overflow:hidden;padding-left:1px}
.pic.one{height:180px}
.pic.two{flex:1;background:linear-gradient(160deg,#fffdf6,#fff6dd 40%,#fffefa 85%)}
.pic figcaption{padding-left:1px;white-space:nowrap;font:11px/14px var(--ms)}
.pic svg{width:268px;margin-left:-2px}
.arrows path{stroke:#00a0e6;stroke-width:2;fill:none}
.arrows path+path{stroke:none;fill:#00a0e6}
.tiny{font:bold 7px var(--ui);fill:#333}
.axl{font:bold 9px var(--ms)}
.dialog>footer{display:flex;gap:9px;padding:8px 9px 10px 9px}
.txt{width:73px;height:21px;border:1px solid #adadad;background:#e1e1e1}
.ok{margin-left:auto;border:2px solid #0078d7}
```
